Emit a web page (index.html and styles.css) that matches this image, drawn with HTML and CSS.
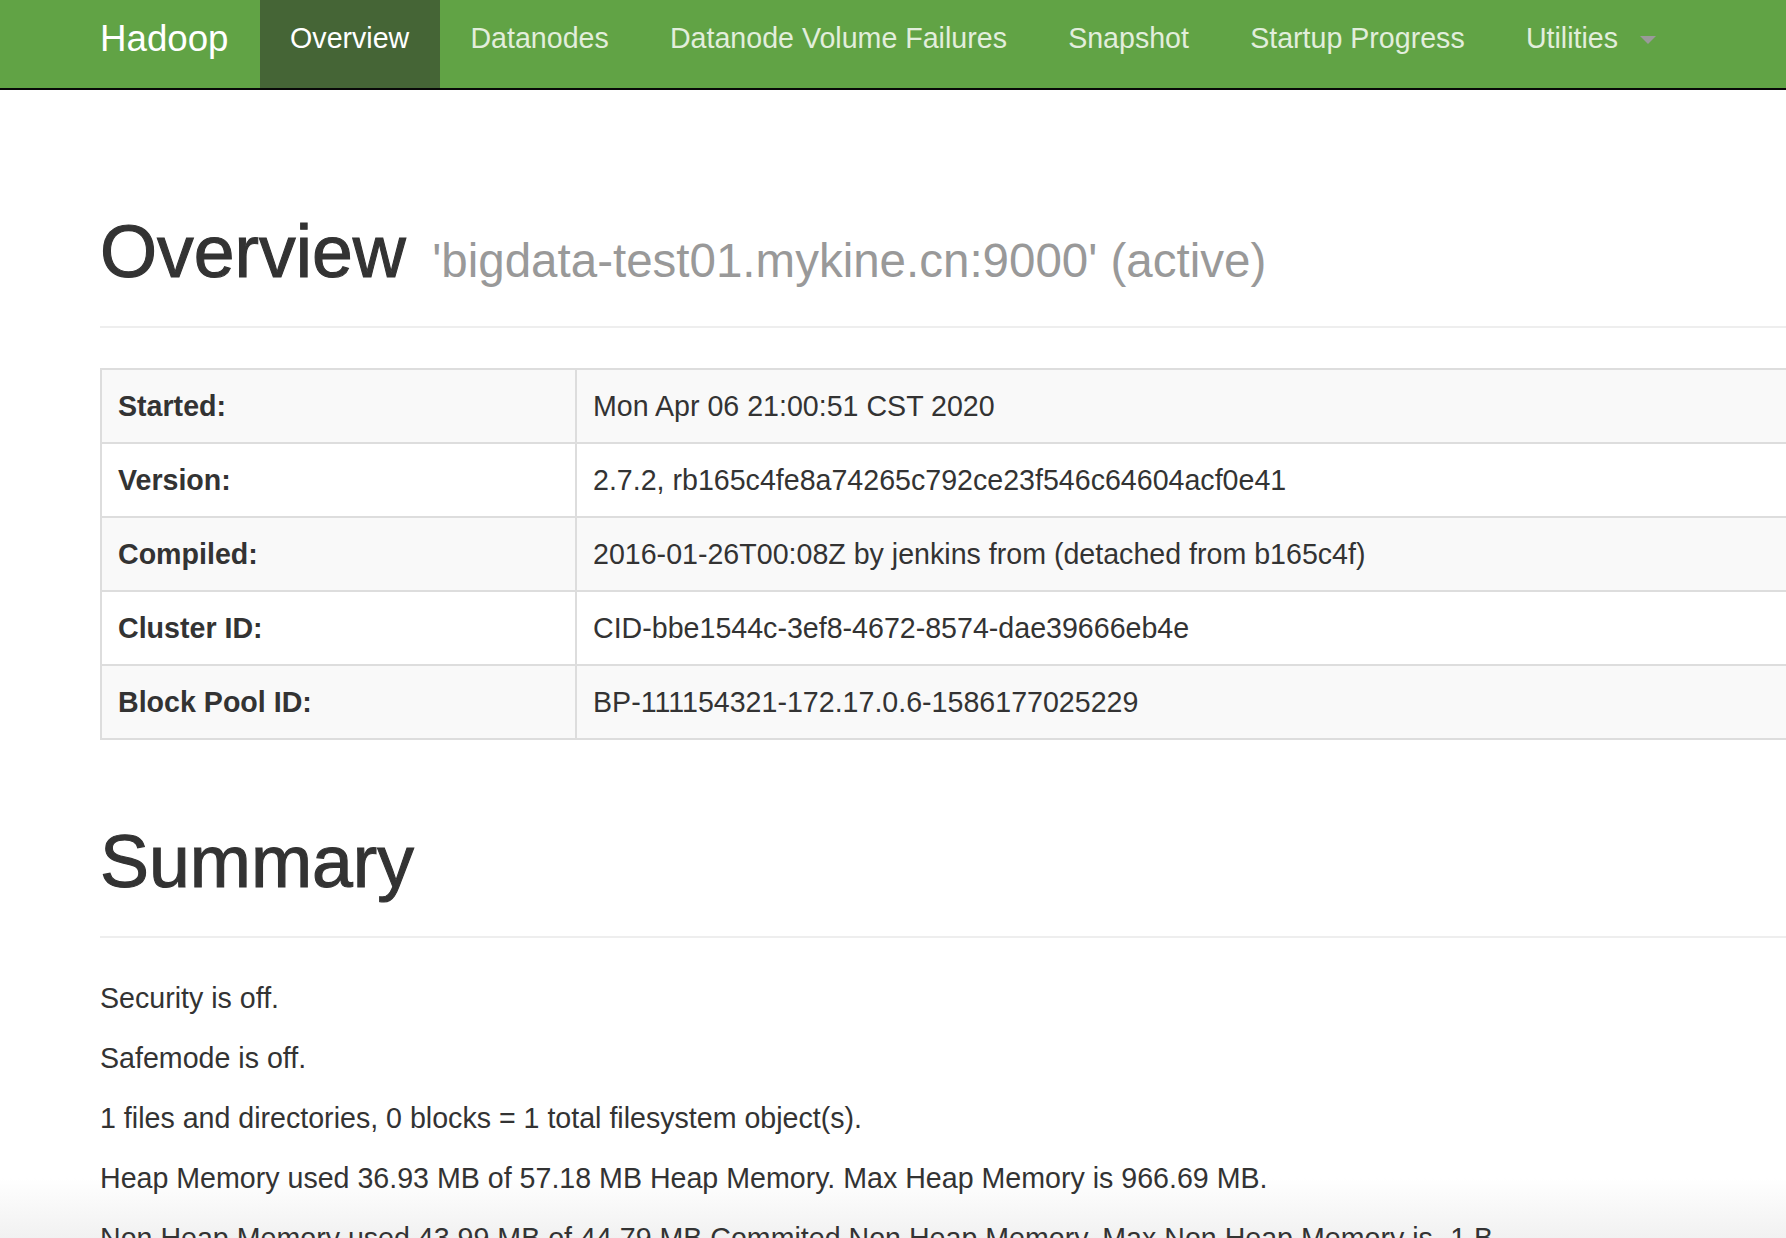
FILE: index.html
```html
<!DOCTYPE html>
<html lang="en">
<head>
<meta charset="utf-8">
<title>Namenode information</title>
<link rel="stylesheet" href="styles.css">
</head>
<body>
<header class="navbar">
  <div class="navbar-inner">
    <a class="brand" href="#">Hadoop</a>
    <ul class="nav">
      <li class="active"><a href="#">Overview</a></li>
      <li><a href="#">Datanodes</a></li>
      <li><a href="#">Datanode Volume Failures</a></li>
      <li><a href="#">Snapshot</a></li>
      <li><a href="#">Startup Progress</a></li>
      <li><a href="#">Utilities<span class="caret"></span></a></li>
    </ul>
  </div>
</header>

<main class="page">
  <div class="page-header first">
    <h1>Overview <small>'bigdata-test01.mykine.cn:9000' (active)</small></h1>
  </div>

  <table class="info">
    <colgroup><col class="c1"><col class="c2"></colgroup>
    <tbody>
      <tr><th>Started:</th><td>Mon Apr 06 21:00:51 CST 2020</td></tr>
      <tr><th>Version:</th><td>2.7.2, rb165c4fe8a74265c792ce23f546c64604acf0e41</td></tr>
      <tr><th>Compiled:</th><td>2016-01-26T00:08Z by jenkins from (detached from b165c4f)</td></tr>
      <tr><th>Cluster ID:</th><td>CID-bbe1544c-3ef8-4672-8574-dae39666eb4e</td></tr>
      <tr><th>Block Pool ID:</th><td>BP-111154321-172.17.0.6-1586177025229</td></tr>
    </tbody>
  </table>

  <div class="page-header">
    <h1>Summary</h1>
  </div>

  <p>Security is off.</p>
  <p>Safemode is off.</p>
  <p>1 files and directories, 0 blocks = 1 total filesystem object(s).</p>
  <p>Heap Memory used 36.93 MB of 57.18 MB Heap Memory. Max Heap Memory is 966.69 MB.</p>
  <p>Non Heap Memory used 43.99 MB of 44.79 MB Commited Non Heap Memory. Max Non Heap Memory is -1 B.</p>
</main>
</body>
</html>
```

FILE: styles.css
```css
html, body {
  margin: 0;
  padding: 0;
  overflow: hidden;
  height: 100%;
}
html {
  background: #fff linear-gradient(to bottom, #fff 0, #fff calc(100% - 60px), #f1f1f1 100%);
}
body {
  font-family: "Liberation Sans", Arial, Helvetica, sans-serif;
  font-size: 28.6px;
  line-height: 40px;
  color: #333;
  background: transparent;
}
a { text-decoration: none; }

.navbar {
  background: #61a345;
  border-bottom: 2px solid #080808;
  height: 88px;
}
.navbar-inner {
  display: flex;
  align-items: stretch;
  height: 88px;
  padding-left: 69px;
}
.brand {
  display: block;
  padding: 0 31px;
  font-size: 36.7px;
  line-height: 78px;
  color: #fff;
  white-space: nowrap;
}
.nav {
  display: flex;
  list-style: none;
  margin: 0;
  padding: 0;
}
.nav li a {
  display: block;
  padding: 0 30.6px;
  line-height: 76px;
  height: 88px;
  color: #e2eedc;
  white-space: nowrap;
}
.nav li.active a {
  background: #456536;
  color: #fff;
}
.caret {
  display: inline-block;
  width: 0;
  height: 0;
  margin-left: 22px;
  vertical-align: 4px;
  border-top: 8px solid #9a9a9a;
  border-left: 8px solid transparent;
  border-right: 8px solid transparent;
}

.page {
  width: 2326px;
  padding-left: 100px;
}

.page-header {
  margin: 82px 0 40px;
  padding-bottom: 34px;
  border-bottom: 2px solid #eee;
}
.page-header.first {
  margin-top: 122px;
  padding-bottom: 25px;
}
.page-header h1 {
  margin: 0;
  font-size: 73.4px;
  line-height: 80px;
  font-weight: normal;
  -webkit-text-stroke: 1.1px #333;
  color: #333;
  white-space: nowrap;
}
.page-header h1 small {
  font-size: 47.5px;
  color: #999;
  -webkit-text-stroke: 0;
  font-weight: normal;
  margin-left: 6px;
}

.info {
  width: 2326px;
  table-layout: fixed;
  border-collapse: collapse;
  border: 2px solid #ddd;
  margin: 0 0 40px;
  background: #fff;
}
.info col.c1 { width: 475px; }
.info th,
.info td {
  border: 2px solid #ddd;
  padding: 16px;
  line-height: 40px;
  text-align: left;
  vertical-align: top;
  white-space: nowrap;
}
.info th { font-weight: bold; }
.info tr:nth-child(odd) { background: #f9f9f9; }

.page p {
  margin: 0 0 20px;
  white-space: nowrap;
}
```
